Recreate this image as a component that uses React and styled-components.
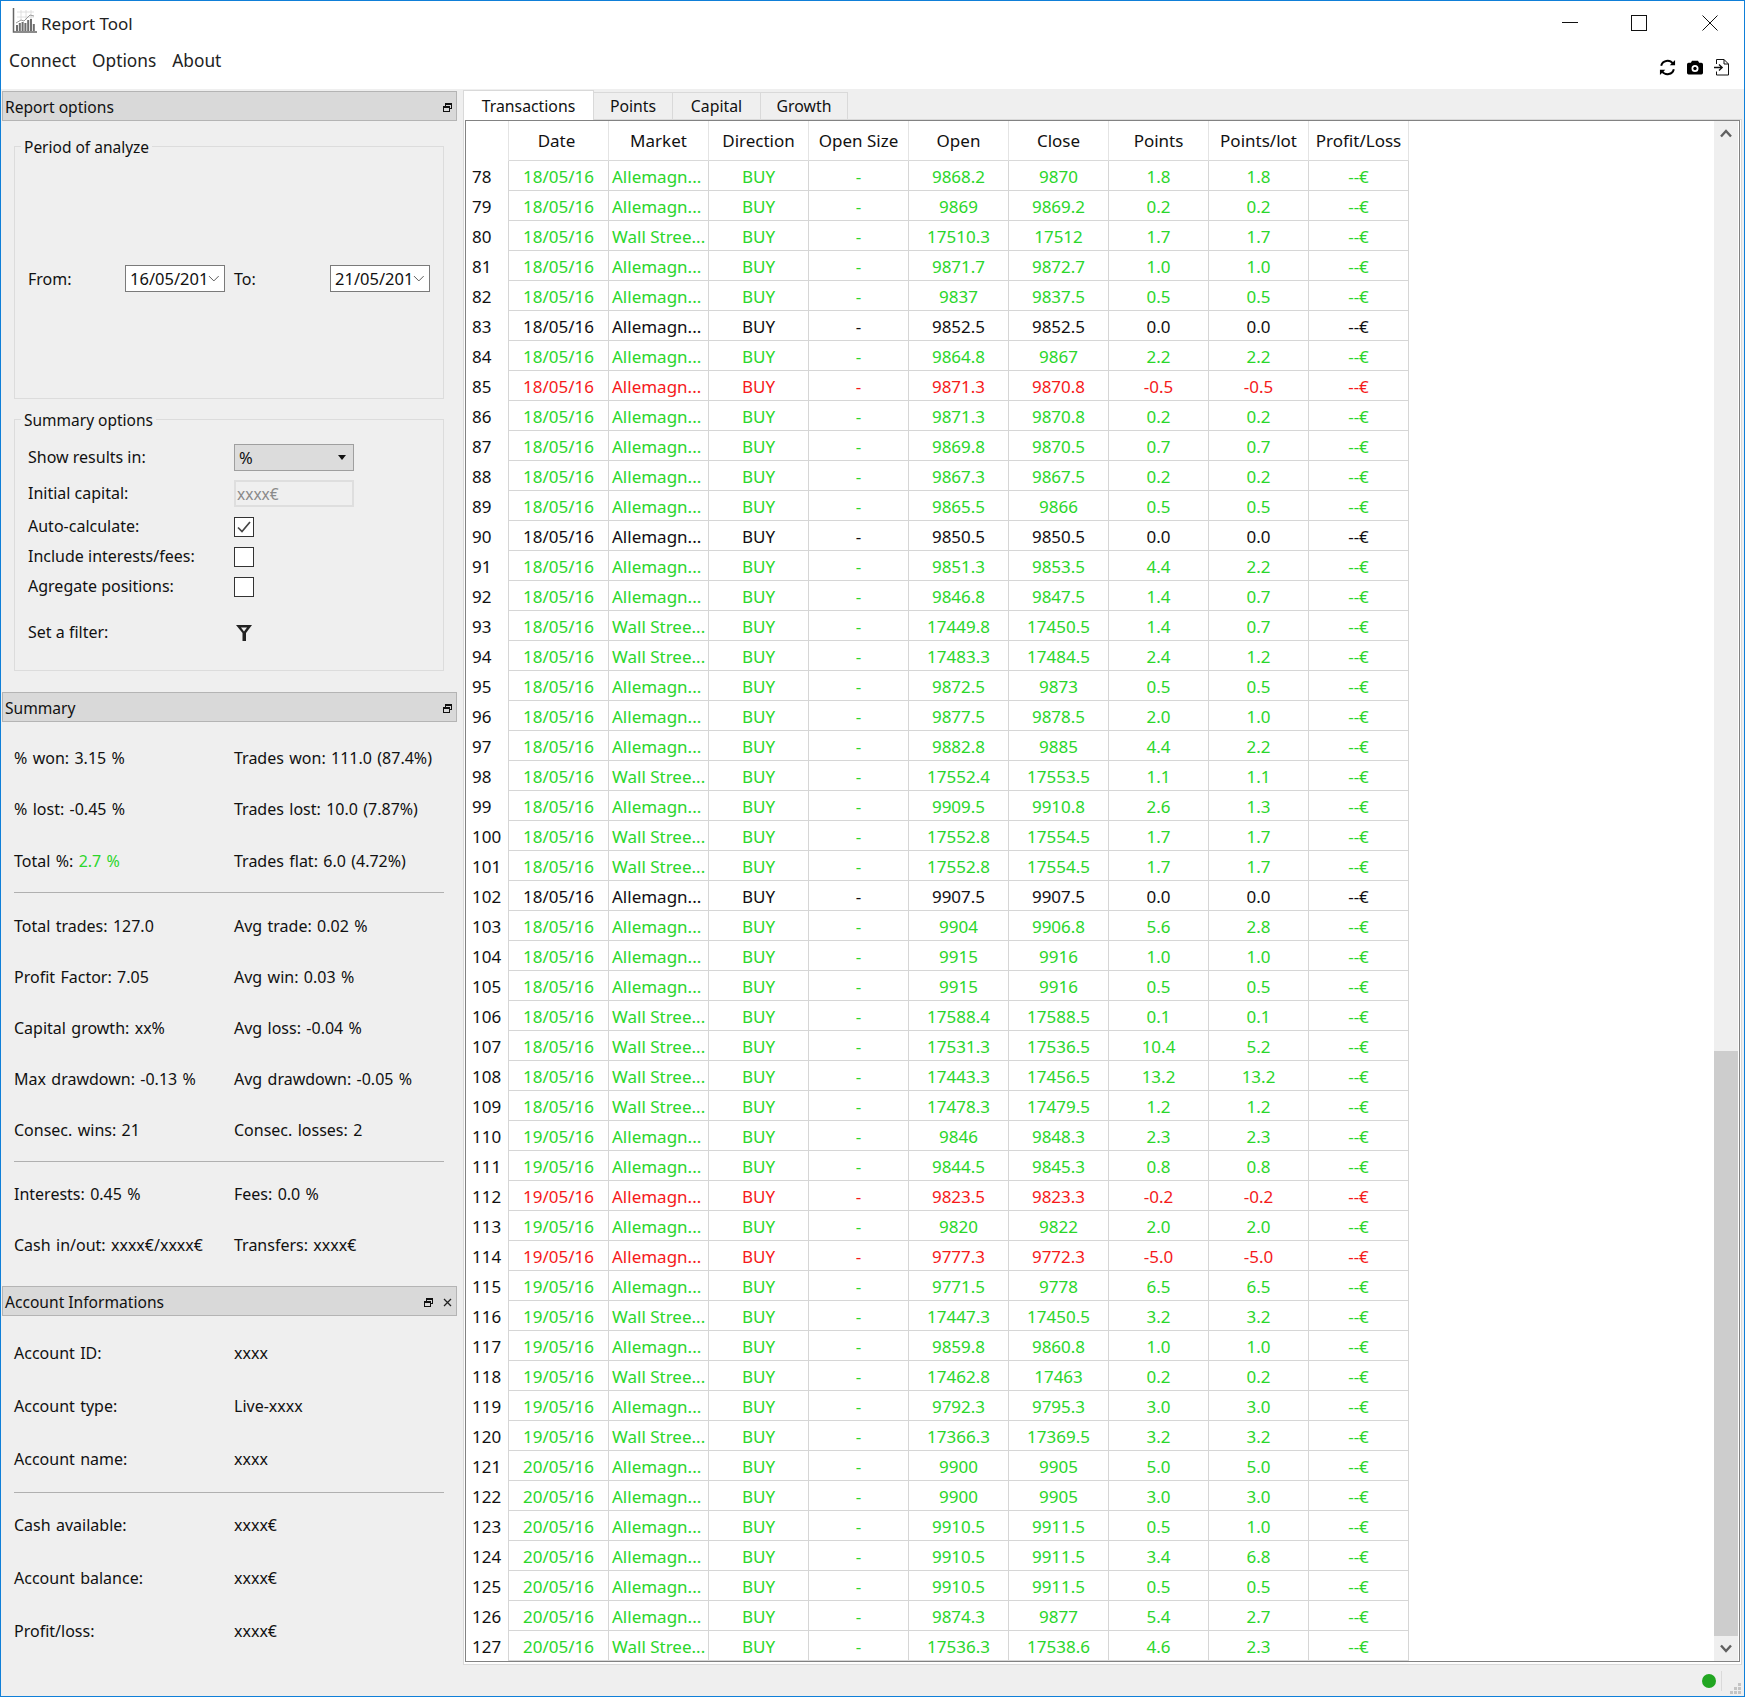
import React from "react";
import styled, { createGlobalStyle } from "styled-components";

const Global = createGlobalStyle`
  html, body { margin: 0; padding: 0; background: #fff; }
  * { box-sizing: border-box; }
`;

const FONT = `"Noto Sans", "Open Sans", "Liberation Sans", sans-serif`;

const Win = styled.div`
  width: 1745px; height: 1697px; border: 1px solid #0f7fd8; background: #efefef;
  font-family: ${FONT}; color: #111; display: flex; flex-direction: column; overflow: hidden;
`;
const TitleBar = styled.div`
  height: 39px; background: #fff; display: flex; align-items: center; padding-left: 11px;
`;
const AppTitle = styled.div`font-size: 17px; margin-left: 4px; flex: 1; margin-top: 6px; color: #222;`;
const WinBtn = styled.div`
  width: 69px; height: 39px; display: flex; align-items: center; justify-content: center; padding-top: 4px; margin-right: ${p => p.$mr || 0}px;
`;
const MenuRow = styled.div`
  height: 49px; background: #fff; display: flex; padding: 0 5px 0 8px;
`;
const MenuItem = styled.div`font-size: 17.3px; margin-right: 16px; margin-top: 9px; color: #222;`;
const Tools = styled.div`
  margin-left: auto; display: flex; align-items: center; gap: 11px; padding: 6px 0 0; height: 48px; margin-right: 10px;
`;
const Body = styled.div`flex: 1; display: flex; padding-top: 1px; min-height: 0;`;
const Side = styled.div`width: 458px; display: flex; flex-direction: column; padding-top: 1px;`;
const DockTitle = styled.div`
  height: 30px; width: 455px; margin-left: 1px; background: #d9d9d9; border: 1px solid #b4b4b4;
  display: flex; align-items: center; padding: 2px 4px 0 2px; font-size: 15.6px; gap: 10px; margin-top: ${p => p.$mt || 0}px;
`;
const DockText = styled.span`flex: 1;`;
const Group = styled.fieldset`
  margin: ${p => p.$mt}px 15px 0 13px; height: ${p => p.$h}px; border: 1px solid #dcdcdc; padding: 0 0 0 13px; min-width: 0;
`;
const Legend = styled.legend`font-size: 15.5px; padding: 0 3px; margin-left: -7px; line-height: 26px; height: 24px;`;
const DateRow = styled.div`
  height: 240px; display: grid; grid-template-columns: 97px 100px 105px 100px; align-items: center; font-size: 16px;
`;
const RowLabel = styled.span`margin-top: 1px;`;
const ToLabel = styled(RowLabel)`padding-left: 9px;`;
const DateEdit = styled.div`
  height: 27px; border: 1px solid #7a7a7a; background: #fff; display: flex; align-items: center; justify-content: space-between;
  padding: 1px 4px 0 4px; font-size: 16.5px; overflow: hidden;
`;
const FormRow = styled.div`
  display: grid; grid-template-columns: 206px 120px; align-items: center; margin-top: ${p => p.$mt}px; height: ${p => p.$h}px;
  font-size: 16px;
`;
const FormLabel = styled.span`margin-top: -1px; white-space: nowrap;`;
const Combo = styled.div`
  height: 27px; background: #dcdcdc; border: 1px solid #9f9f9f; display: flex; align-items: center; justify-content: space-between;
  padding: 0 7px 0 4px; font-size: 16.5px;
`;
const CapInput = styled.div`
  height: 27px; background: #efefef; border: 2px solid #dedede; display: flex; align-items: center; padding-left: 1px;
  font-size: 15.5px; color: #8a8a8a;
`;
const Check = styled.div`
  width: 20px; height: 20px; background: #fff; border: 1px solid #333; display: flex; align-items: center; justify-content: center;
`;
const FilterSlot = styled.div`display: flex; padding-left: 2px;`;
const InfoGrid = styled.div`
  display: grid; grid-template-columns: 220px 1fr; grid-auto-rows: ${p => p.$rh}px; align-items: center;
  padding-left: 13px; padding-top: ${p => p.$pt || 0}px; font-size: 16px; white-space: nowrap; word-spacing: 1.2px;
`;
const Rule = styled.div`height: 1px; background: #b0b0b0; margin: ${p => p.$t}px 15px ${p => p.$b}px 13px;`;
const Good = styled.span`color: #2bd62b;`;

const Main = styled.div`width: 1279px; margin-left: 4px; display: flex; flex-direction: column;`;
const Tabs = styled.div`height: 29px; display: flex; align-items: flex-end;`;
const Tab = styled.div`
  height: ${p => (p.$on ? 30 : 27)}px; width: ${p => p.$w}px; border: 1px solid #d9d9d9; border-bottom: 0; border-left-width: ${p => (p.$first ? 1 : 0)}px;
  background: ${p => (p.$on ? "#fff" : "#efefef")}; display: flex; align-items: center; justify-content: center; font-size: 15.8px;
  position: relative; margin-bottom: ${p => (p.$on ? -1 : 0)}px; z-index: ${p => (p.$on ? 1 : 0)};
`;
const Pane = styled.div`
  height: 1546px; border: 1px solid #d9d9d9; background: #fff; padding: 0 1px 2px 1px; display: flex;
`;
const Frame = styled.div`flex: 1; border: 1px solid #828282; display: flex; min-width: 0;`;
const TableWrap = styled.div`flex: 1; min-width: 0; overflow: hidden;`;
const Table = styled.table`
  border-collapse: separate; border-spacing: 0; table-layout: fixed; width: 943px; font-size: 17px;
`;
const Corner = styled.th`width: 43px; height: 40px; padding: 0; border-right: 1px solid #e4e4e4; font-weight: 400;`;
const Head = styled.th`
  width: 100px; height: 40px; padding: 0 ${p => p.$pr || 0}px 0 0; font-weight: 400; text-align: center; white-space: nowrap; overflow: hidden;
  border-right: 1px solid #e4e4e4; border-bottom: 1px solid #d9d9d9;
`;
const RowHead = styled.td`
  height: 30px; padding: 1px 0 0 6px; border-right: 1px solid #d6d6d6; color: #111;
`;
const Cell = styled.td`
  height: 30px; padding: ${p => (p.$left ? "1px 0 0 3px" : "1px 0 0")}; text-align: ${p => (p.$left ? "left" : "center")};
  border-right: 1px solid #d6d6d6; border-bottom: 1px solid #d6d6d6; white-space: nowrap; overflow: hidden;
  color: ${p => ({ g: "#2bd62b", r: "#f51a1a", k: "#111" }[p.$tone])};
`;
const Scroll = styled.div`width: 24px; margin-right: 1px; background: #efefef; display: flex; flex-direction: column;`;
const ScrollBtn = styled.div`height: 25px; display: flex; align-items: center; justify-content: center; flex: none;`;
const Track = styled.div`flex: 1;`;
const Thumb = styled.div`height: 585px; background: #cdcdcd; flex: none;`;
const Status = styled.div`flex: 1; display: flex; justify-content: flex-end; align-items: center; padding-right: 1px; gap: 5px;`;
const Dot = styled.div`width: 14px; height: 14px; border-radius: 50%; background: #21a621;`;
const Sep = styled.div`width: 1px; height: 20px; background: #dadada; margin-right: 3px;`;
const GripBox = styled.div`align-self: flex-end; display: flex; padding-bottom: 1px;`;

const RestoreIcon = () => (
  <svg width="9" height="9" viewBox="0 0 9 9" fill="none" stroke="#111" strokeWidth="1" shapeRendering="crispEdges">
    <rect x="2.5" y="0.5" width="6" height="5" /><line x1="2" y1="1.5" x2="9" y2="1.5" />
    <rect x="0.5" y="3.5" width="6" height="5" fill="#d9d9d9" /><line x1="0" y1="4.5" x2="7" y2="4.5" />
  </svg>
);
const CloseSmall = () => (
  <svg width="9" height="9" viewBox="0 0 9 9" stroke="#222" strokeWidth="1.3"><path d="M1 1l7 7M8 1l-7 7" /></svg>
);
const Caret = () => (
  <svg width="12" height="7" viewBox="0 0 12 7" fill="none" stroke="#555" strokeWidth="1"><path d="M1 1l5 5 5-5" /></svg>
);
const Logo = () => (
  <svg width="25" height="25" viewBox="0 0 25 25" fill="none">
    <path d="M5 4h17M5 9h17M9 2v10M14 2v10M19 2v10" stroke="#d8d8d8" strokeWidth=".8" />
    <path d="M1.500 0v24h24" stroke="#666" strokeWidth="1.500" />
    <g fill="#6e6e6e">
      <rect x="4" y="17" width="2" height="6" /><rect x="6.800" y="15" width="2" height="8" /><rect x="9.600" y="14" width="2" height="9" />
      <rect x="12.400" y="15" width="2" height="8" /><rect x="15.200" y="12" width="2" height="11" /><rect x="18" y="11" width="2" height="12" /><rect x="20.800" y="16" width="2" height="7" />
    </g>
    <path d="M4 15l5-3 3 1 6-6 4 1" stroke="#9a9a9a" strokeWidth="1" />
  </svg>
);
const SyncIcon = () => (
  <svg width="17" height="17" viewBox="0 0 18 18" fill="none" stroke="#000" strokeWidth="2.100">
    <path d="M2.300 7.200A6.900 6.900 0 0 1 14.600 4.800" /><path d="M15.700 10.800A6.900 6.900 0 0 1 3.400 13.200" />
    <path d="M17 1v5.600h-5.600z" fill="#000" stroke="none" /><path d="M1 17v-5.600h5.600z" fill="#000" stroke="none" />
  </svg>
);
const CameraIcon = () => (
  <svg width="16" height="15" viewBox="0 0 16 15">
    <path fillRule="evenodd" fill="#000" d="M5 .8h6l1.100 2H14.400A1.600 1.600 0 0 1 16 4.400v8.400a1.600 1.600 0 0 1-1.600 1.600H1.600A1.600 1.600 0 0 1 0 12.800V4.400A1.600 1.600 0 0 1 1.600 2.800H3.900zM8 5a3.500 3.500 0 1 0 0 7 3.500 3.500 0 0 0 0-7z" />
    <circle cx="8" cy="8.500" r="1.700" fill="#000" />
  </svg>
);
const ExportIcon = () => (
  <svg width="15" height="17" viewBox="0 0 15 17" fill="none" stroke="#111" strokeWidth="1">
    <path d="M2.500 5V.5h7.500l4.500 4.500v11H2.500v-3.500" /><path d="M10 .5V5h4.500" />
    <path d="M0 8.500h8M5 5.500l3.200 3-3.200 3" strokeWidth="1.300" />
  </svg>
);
const FilterIcon = () => (
  <svg width="16" height="16" viewBox="0 0 16 16">
    <path fillRule="evenodd" fill="#222" d="M0 0h16L10 8V16H6.500V8zM5 2.500L8 6.500l3-4z" />
  </svg>
);
const Tick = () => (
  <svg width="14" height="12" viewBox="0 0 14 12" fill="none" stroke="#444" strokeWidth="1.700"><path d="M1 6.500l4 4 8-9.500" /></svg>
);
const ChevUp = () => (
  <svg width="12" height="9" viewBox="0 0 12 9" fill="none" stroke="#606060" strokeWidth="2.400"><path d="M1 7.500l5-5.500 5 5.500" /></svg>
);
const ChevDown = () => (
  <svg width="12" height="9" viewBox="0 0 12 9" fill="none" stroke="#606060" strokeWidth="2.400"><path d="M1 1.500l5 5.500 5-5.500" /></svg>
);
const Grip = () => (
  <svg width="11" height="12" viewBox="0 0 11 12" fill="#c4c4c4" shapeRendering="crispEdges">
    <rect x="8" y="0" width="3" height="3" /><rect x="4" y="4" width="3" height="3" /><rect x="8" y="4" width="3" height="3" />
    <rect x="0" y="8" width="3" height="3" /><rect x="4" y="8" width="3" height="3" /><rect x="8" y="8" width="3" height="3" />
  </svg>
);

const RAW = `78 8 A 9868.2 9870 1.8 1.8 g
79 8 A 9869 9869.2 0.2 0.2 g
80 8 W 17510.3 17512 1.7 1.7 g
81 8 A 9871.7 9872.7 1.0 1.0 g
82 8 A 9837 9837.5 0.5 0.5 g
83 8 A 9852.5 9852.5 0.0 0.0 k
84 8 A 9864.8 9867 2.2 2.2 g
85 8 A 9871.3 9870.8 -0.5 -0.5 r
86 8 A 9871.3 9870.8 0.2 0.2 g
87 8 A 9869.8 9870.5 0.7 0.7 g
88 8 A 9867.3 9867.5 0.2 0.2 g
89 8 A 9865.5 9866 0.5 0.5 g
90 8 A 9850.5 9850.5 0.0 0.0 k
91 8 A 9851.3 9853.5 4.4 2.2 g
92 8 A 9846.8 9847.5 1.4 0.7 g
93 8 W 17449.8 17450.5 1.4 0.7 g
94 8 W 17483.3 17484.5 2.4 1.2 g
95 8 A 9872.5 9873 0.5 0.5 g
96 8 A 9877.5 9878.5 2.0 1.0 g
97 8 A 9882.8 9885 4.4 2.2 g
98 8 W 17552.4 17553.5 1.1 1.1 g
99 8 A 9909.5 9910.8 2.6 1.3 g
100 8 W 17552.8 17554.5 1.7 1.7 g
101 8 W 17552.8 17554.5 1.7 1.7 g
102 8 A 9907.5 9907.5 0.0 0.0 k
103 8 A 9904 9906.8 5.6 2.8 g
104 8 A 9915 9916 1.0 1.0 g
105 8 A 9915 9916 0.5 0.5 g
106 8 W 17588.4 17588.5 0.1 0.1 g
107 8 W 17531.3 17536.5 10.4 5.2 g
108 8 W 17443.3 17456.5 13.2 13.2 g
109 8 W 17478.3 17479.5 1.2 1.2 g
110 9 A 9846 9848.3 2.3 2.3 g
111 9 A 9844.5 9845.3 0.8 0.8 g
112 9 A 9823.5 9823.3 -0.2 -0.2 r
113 9 A 9820 9822 2.0 2.0 g
114 9 A 9777.3 9772.3 -5.0 -5.0 r
115 9 A 9771.5 9778 6.5 6.5 g
116 9 W 17447.3 17450.5 3.2 3.2 g
117 9 A 9859.8 9860.8 1.0 1.0 g
118 9 W 17462.8 17463 0.2 0.2 g
119 9 A 9792.3 9795.3 3.0 3.0 g
120 9 W 17366.3 17369.5 3.2 3.2 g
121 0 A 9900 9905 5.0 5.0 g
122 0 A 9900 9905 3.0 3.0 g
123 0 A 9910.5 9911.5 0.5 1.0 g
124 0 A 9910.5 9911.5 3.4 6.8 g
125 0 A 9910.5 9911.5 0.5 0.5 g
126 0 A 9874.3 9877 5.4 2.7 g
127 0 W 17536.3 17538.6 4.6 2.3 g`;

const ROWS = RAW.split("\n").map(l => {
  const [n, d, m, open, close, pts, lot, tone] = l.split(" ");
  return {
    n, open, close, pts, lot, tone,
    date: { 8: "18/05/16", 9: "19/05/16", 0: "20/05/16" }[d],
    market: m === "A" ? "Allemagn..." : "Wall Stree...",
  };
});
const COLS = ["Date", "Market", "Direction", "Open Size", "Open", "Close", "Points", "Points/lot", "Profit/Loss"];

const SUM1 = [
  ["% won: 3.15 %", "Trades won: 111.0 (87.4%)"],
  ["% lost: -0.45 %", "Trades lost: 10.0 (7.87%)"],
  [<>Total %: <Good>2.7 %</Good></>, "Trades flat: 6.0 (4.72%)"],
];
const SUM2 = [
  ["Total trades: 127.0", "Avg trade: 0.02 %"],
  ["Profit Factor: 7.05", "Avg win: 0.03 %"],
  ["Capital growth: xx%", "Avg loss: -0.04 %"],
  ["Max drawdown: -0.13 %", "Avg drawdown: -0.05 %"],
  ["Consec. wins: 21", "Consec. losses: 2"],
];
const SUM3 = [
  ["Interests: 0.45 %", "Fees: 0.0 %"],
  ["Cash in/out: xxxx€/xxxx€", "Transfers: xxxx€"],
];
const ACC1 = [["Account ID:", "xxxx"], ["Account type:", "Live-xxxx"], ["Account name:", "xxxx"]];
const ACC2 = [["Cash available:", "xxxx€"], ["Account balance:", "xxxx€"], ["Profit/loss:", "xxxx€"]];

const Info = ({ rows, rh, pt }) => (
  <InfoGrid $rh={rh} $pt={pt}>
    {rows.map(([a, b], i) => (
      <React.Fragment key={i}><span>{a}</span><span>{b}</span></React.Fragment>
    ))}
  </InfoGrid>
);

export default function App() {
  return (
    <Win>
      <Global />
      <TitleBar>
        <Logo />
        <AppTitle>Report Tool</AppTitle>
        <WinBtn>
          <svg width="16" height="2" viewBox="0 0 16 2"><rect width="16" height="1" fill="#111" /></svg>
        </WinBtn>
        <WinBtn $mr={2}>
          <svg width="16" height="16" viewBox="0 0 16 16" fill="none" stroke="#111"><rect x=".5" y=".5" width="15" height="15" /></svg>
        </WinBtn>
        <WinBtn>
          <svg width="16" height="16" viewBox="0 0 16 16" stroke="#111"><path d="M.5.500l15 15M15.500.500l-15 15" /></svg>
        </WinBtn>
      </TitleBar>
      <MenuRow>
        <MenuItem>Connect</MenuItem>
        <MenuItem>Options</MenuItem>
        <MenuItem>About</MenuItem>
        <Tools><SyncIcon /><CameraIcon /><ExportIcon /></Tools>
      </MenuRow>
      <Body>
        <Side>
          <DockTitle><DockText>Report options</DockText><RestoreIcon /></DockTitle>
          <Group $mt={13} $h={265}>
            <Legend>Period of analyze</Legend>
            <DateRow>
              <RowLabel>From:</RowLabel>
              <DateEdit>16/05/201<Caret /></DateEdit>
              <ToLabel>To:</ToLabel>
              <DateEdit>21/05/201<Caret /></DateEdit>
            </DateRow>
          </Group>
          <Group $mt={8} $h={264}>
            <Legend>Summary options</Legend>
            <FormRow $mt={13} $h={27}>
              <FormLabel>Show results in:</FormLabel>
              <Combo>%<svg width="8" height="5" viewBox="0 0 8 5"><path d="M0 0h8L4 5z" fill="#111" /></svg></Combo>
            </FormRow>
            <FormRow $mt={9} $h={27}>
              <FormLabel>Initial capital:</FormLabel>
              <CapInput>xxxx€</CapInput>
            </FormRow>
            <FormRow $mt={9} $h={20}>
              <FormLabel>Auto-calculate:</FormLabel>
              <Check><Tick /></Check>
            </FormRow>
            <FormRow $mt={10} $h={20}>
              <FormLabel>Include interests/fees:</FormLabel>
              <Check />
            </FormRow>
            <FormRow $mt={10} $h={20}>
              <FormLabel>Agregate positions:</FormLabel>
              <Check />
            </FormRow>
            <FormRow $mt={26} $h={20}>
              <FormLabel>Set a filter:</FormLabel>
              <FilterSlot><FilterIcon /></FilterSlot>
            </FormRow>
          </Group>
          <DockTitle $mt={21}><DockText>Summary</DockText><RestoreIcon /></DockTitle>
          <Info rows={SUM1} rh={51.5} pt={10} />
          <Rule $t={5.5} $b={5.5} />
          <Info rows={SUM2} rh={51.2} pt={1.5} />
          <Rule $t={5.5} $b={6} />
          <Info rows={SUM3} rh={51.3} />
          <DockTitle $mt={15}><DockText>Account Informations</DockText><RestoreIcon /><CloseSmall /></DockTitle>
          <Info rows={ACC1} rh={53} pt={10.5} />
          <Rule $t={6} $b={6} />
          <Info rows={ACC2} rh={53} />
        </Side>
        <Main>
          <Tabs>
            <Tab $on $first $w={131}>Transactions</Tab>
            <Tab $w={79}>Points</Tab>
            <Tab $w={88}>Capital</Tab>
            <Tab $w={87}>Growth</Tab>
          </Tabs>
          <Pane>
            <Frame>
              <TableWrap>
                <Table>
                  <thead>
                    <tr><Corner />{COLS.map(c => <Head key={c} $pr={c === "Date" ? 4 : 0}>{c}</Head>)}</tr>
                  </thead>
                  <tbody>
                    {ROWS.map(r => (
                      <tr key={r.n}>
                        <RowHead>{r.n}</RowHead>
                        <Cell $tone={r.tone}>{r.date}</Cell>
                        <Cell $tone={r.tone} $left>{r.market}</Cell>
                        <Cell $tone={r.tone}>BUY</Cell>
                        <Cell $tone={r.tone}>-</Cell>
                        <Cell $tone={r.tone}>{r.open}</Cell>
                        <Cell $tone={r.tone}>{r.close}</Cell>
                        <Cell $tone={r.tone}>{r.pts}</Cell>
                        <Cell $tone={r.tone}>{r.lot}</Cell>
                        <Cell $tone={r.tone}>--€</Cell>
                      </tr>
                    ))}
                  </tbody>
                </Table>
              </TableWrap>
              <Scroll>
                <ScrollBtn><ChevUp /></ScrollBtn>
                <Track />
                <Thumb />
                <ScrollBtn><ChevDown /></ScrollBtn>
              </Scroll>
            </Frame>
          </Pane>
          <Status><Dot /><Sep /><GripBox><Grip /></GripBox></Status>
        </Main>
      </Body>
    </Win>
  );
}
